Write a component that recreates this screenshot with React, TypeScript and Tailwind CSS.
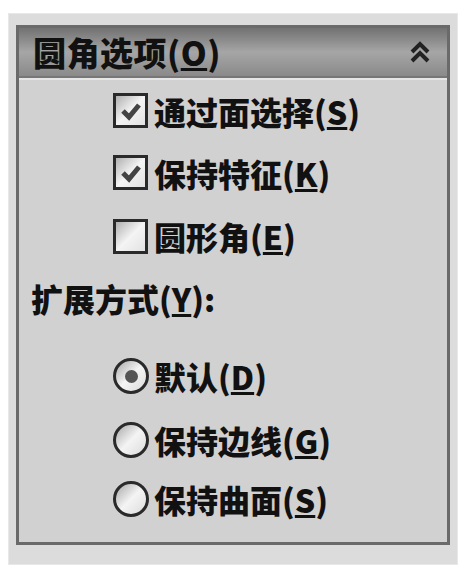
import React from "react";

const font = { fontFamily: '"Noto Sans CJK SC", "Noto Sans", sans-serif' };

function Check({ checked }: { checked: boolean }) {
  return (
    <div className="w-[35px] h-[35px] border-[3px] border-[#2a2a2a] bg-gradient-to-br from-[#b0b0b0] via-[#f4f4f4] to-[#e2e2e2] flex items-center justify-center shrink-0">
      {checked && (
        <svg width="22" height="20" viewBox="0 0 22 20">
          <path d="M3 10 L9 16 L19 4" fill="none" stroke="#444" strokeWidth="5" strokeLinejoin="miter" />
        </svg>
      )}
    </div>
  );
}

function Radio({ checked }: { checked: boolean }) {
  return (
    <div className="w-[36px] h-[36px] rounded-full border-[3px] border-[#2a2a2a] bg-gradient-to-br from-[#a8a8a8] via-[#f4f4f4] to-[#dcdcdc] flex items-center justify-center shrink-0">
      {checked && <div className="w-[13px] h-[13px] rounded-full bg-[#555]" />}
    </div>
  );
}

function Label({ text, k }: { text: string; k: string }) {
  return (
    <span className="text-[32px] font-black text-[#111] leading-none whitespace-nowrap">
      {text}(<span className="underline underline-offset-2">{k}</span>)
    </span>
  );
}

export default function App() {
  return (
    <div className="w-[473px] h-[582px] bg-white pl-[8px] pt-[13px]" style={font}>
      <div className="w-[450px] h-[552px] bg-[#dcdcdc] border border-[#e8e8e8] pl-[7px] pt-[11px] pr-[9px]">
        <div className="w-[434px] h-[520px] border-[3px] border-[#6a6a6a] bg-[#d1d1d1] flex flex-col">
          <div className="h-[50px] bg-gradient-to-b from-[#727272] via-[#a6a6a6] to-[#8a8a8a] flex items-center pl-[14px] pr-[14px] border-b-[2px] border-b-[#777]">
            <span className="text-[33px] font-black text-[#111] leading-none tracking-[0.5px]">
              圆角选项(<span className="underline underline-offset-2">O</span>)
            </span>
            <div className="ml-auto mr-[1px]">
              <svg width="24" height="26" viewBox="0 0 24 26">
                <path d="M4 13 L12 5 L20 13" fill="none" stroke="#222" strokeWidth="4" />
                <path d="M4 22 L12 14 L20 22" fill="none" stroke="#222" strokeWidth="4" />
              </svg>
            </div>
          </div>
          <div className="h-[2px] bg-[#e6e6e6]" />
          <div className="flex flex-col">
            <div className="h-[61px] flex items-center pl-[94px] gap-[6px]">
              <Check checked />
              <Label text="通过面选择" k="S" />
            </div>
            <div className="h-[63px] flex items-center pl-[94px] gap-[6px]">
              <Check checked />
              <Label text="保持特征" k="K" />
            </div>
            <div className="h-[64px] flex items-center pl-[94px] gap-[6px]">
              <Check checked={false} />
              <Label text="圆形角" k="E" />
            </div>
            <div className="h-[60px] flex items-center pl-[12px]">
              <span className="text-[32px] font-black text-[#111] leading-none whitespace-nowrap">
                扩展方式(<span className="underline underline-offset-2">Y</span>):
              </span>
            </div>
            <div className="h-[16px]" />
            <div className="h-[64px] flex items-center pl-[94px] gap-[5px]">
              <Radio checked />
              <Label text="默认" k="D" />
            </div>
            <div className="h-[64px] flex items-center pl-[94px] gap-[5px]">
              <Radio checked={false} />
              <Label text="保持边线" k="G" />
            </div>
            <div className="h-[54px] flex items-center pl-[94px] gap-[5px]">
              <Radio checked={false} />
              <Label text="保持曲面" k="S" />
            </div>
          </div>
        </div>
      </div>
    </div>
  );
}
